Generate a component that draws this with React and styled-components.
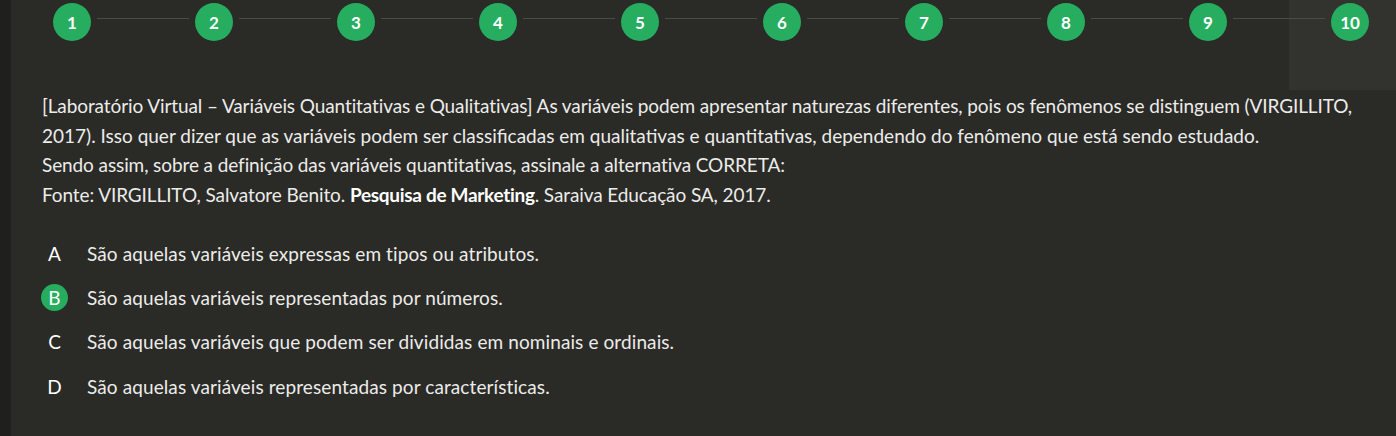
import React from "react";
import styled, { createGlobalStyle } from "styled-components";

const GlobalStyle = createGlobalStyle`
  html, body { margin: 0; padding: 0; background: #2a2a26; }
  body { font-family: Lato, "Noto Sans", sans-serif; color: #ececea; }
`;

const Page = styled.div`
  display: flex;
  width: 1396px;
  height: 436px;
  overflow: hidden;
  background: #2a2a26;
`;

const SideStrip = styled.div`
  width: 11px;
  flex: none;
  background: #1f1f1d;
`;

const Main = styled.div`
  flex: 1;
  display: flex;
  flex-direction: column;
`;

const Header = styled.div`
  height: 90px;
  flex: none;
  background: linear-gradient(to right, transparent 1278px, #32322e 1278px);
`;

const Stepper = styled.ol`
  list-style: none;
  margin: 0;
  padding: 3px 0 0 42px;
  display: flex;
  align-items: flex-start;
`;

const Step = styled.li`
  display: flex;
  align-items: flex-start;
`;

const StepCircle = styled.span`
  width: 38px;
  height: 38px;
  border-radius: 50%;
  background: #26ad5f;
  color: #fff;
  font-weight: 700;
  font-size: 17px;
  display: flex;
  align-items: center;
  justify-content: center;
`;

const Connector = styled.span`
  width: 92px;
  height: 1px;
  margin: 15px 6px 0;
  background: #4c4c47;
`;

const Content = styled.div`
  padding: 1px 0 0 31px;
`;

const Statement = styled.p`
  margin: 0;
  font-size: 19px;
  line-height: 29.7px;
  letter-spacing: -0.1px;
  white-space: nowrap;
`;

const Wide = styled.span`
  letter-spacing: 0;
`;

const Strong = styled.strong`
  font-weight: 700;
  color: #fff;
  letter-spacing: -0.3px;
`;

const Options = styled.ul`
  list-style: none;
  margin: 30px 0 0;
  padding: 0;
  display: flex;
  flex-direction: column;
  gap: 17.33px;
`;

const Option = styled.li`
  display: flex;
  align-items: center;
  gap: 19px;
  min-height: 27px;
  font-size: 19px;
  letter-spacing: 0.1px;
`;

const Letter = styled.span`
  width: 27px;
  height: 27px;
  margin-left: -1px;
  flex: none;
  border-radius: 50%;
  display: flex;
  align-items: center;
  justify-content: center;
  background: ${(p) => (p.$selected ? "#26ad5f" : "transparent")};
  color: #fff;
  letter-spacing: 0;
`;

const steps = [1, 2, 3, 4, 5, 6, 7, 8, 9, 10];
const options = [
  ["A", "São aquelas variáveis expressas em tipos ou atributos."],
  ["B", "São aquelas variáveis representadas por números."],
  ["C", "São aquelas variáveis que podem ser divididas em nominais e ordinais."],
  ["D", "São aquelas variáveis representadas por características."],
];

export default function App() {
  return (
    <Page>
      <GlobalStyle />
      <SideStrip />
      <Main>
        <Header>
          <Stepper>
            {steps.map((n, i) => (
              <Step key={n}>
                <StepCircle>{n}</StepCircle>
                {i < steps.length - 1 && <Connector />}
              </Step>
            ))}
          </Stepper>
        </Header>
        <Content>
          <Statement>
            [Laboratório Virtual – Variáveis Quantitativas e Qualitativas] As variáveis podem apresentar naturezas diferentes, pois os fenômenos se distinguem (VIRGILLITO,
            <br />
            <Wide>2017). Isso quer dizer que as variáveis podem ser classificadas em qualitativas e quantitativas, dependendo do fenômeno que está sendo estudado.</Wide>
            <br />
            Sendo assim, sobre a definição das variáveis quantitativas, assinale a alternativa CORRETA:
            <br />
            Fonte: VIRGILLITO, Salvatore Benito. <Strong>Pesquisa de Marketing</Strong>. Saraiva Educação SA, 2017.
          </Statement>
          <Options>
            {options.map(([l, t]) => (
              <Option key={l}>
                <Letter $selected={l === "B"}>{l}</Letter>
                <span>{t}</span>
              </Option>
            ))}
          </Options>
        </Content>
      </Main>
    </Page>
  );
}
